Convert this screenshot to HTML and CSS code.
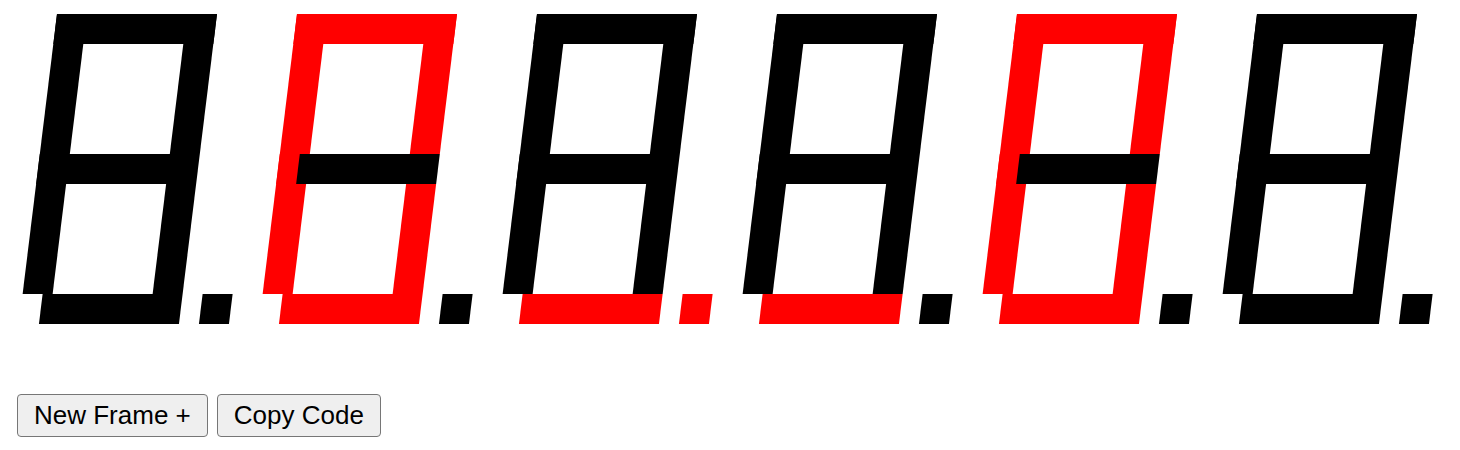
FILE: index.html
```html
<!DOCTYPE html>
<html lang="en">
<head>
<meta charset="utf-8">
<title>Seven Segment Frames</title>
<link rel="stylesheet" href="styles.css">
</head>
<body>
<div class="display-wrap">
  <div class="display">
    <div class="digit">
      <span class="seg a"></span><span class="seg f"></span><span class="seg e"></span>
      <span class="seg b"></span><span class="seg c"></span><span class="seg g"></span>
      <span class="seg d"></span><span class="seg dp"></span>
    </div>
    <div class="digit">
      <span class="seg a on"></span><span class="seg f on"></span><span class="seg e on"></span>
      <span class="seg b on"></span><span class="seg c on"></span><span class="seg g"></span>
      <span class="seg d on"></span><span class="seg dp"></span>
    </div>
    <div class="digit">
      <span class="seg a"></span><span class="seg f"></span><span class="seg e"></span>
      <span class="seg b"></span><span class="seg c"></span><span class="seg g"></span>
      <span class="seg d on"></span><span class="seg dp on"></span>
    </div>
    <div class="digit">
      <span class="seg a"></span><span class="seg f"></span><span class="seg e"></span>
      <span class="seg b"></span><span class="seg c"></span><span class="seg g"></span>
      <span class="seg d on"></span><span class="seg dp"></span>
    </div>
    <div class="digit">
      <span class="seg a on"></span><span class="seg f on"></span><span class="seg e on"></span>
      <span class="seg b on"></span><span class="seg c on"></span><span class="seg g"></span>
      <span class="seg d on"></span><span class="seg dp"></span>
    </div>
    <div class="digit">
      <span class="seg a"></span><span class="seg f"></span><span class="seg e"></span>
      <span class="seg b"></span><span class="seg c"></span><span class="seg g"></span>
      <span class="seg d"></span><span class="seg dp"></span>
    </div>
  </div>
</div>
<div class="controls">
  <button class="btn" type="button">New Frame +</button>
  <button class="btn" type="button">Copy Code</button>
</div>
</body>
</html>
```
FILE: styles.css
```css
body {
  margin: 8px;
  font-family: "Liberation Sans", Arial, sans-serif;
  background: #fff;
}

.display-wrap {
  overflow: hidden;
  margin-top: 6px;
}

.display {
  display: flex;
  gap: 30px;
  padding-left: 48.5px;
  transform: skewX(-7deg);
  transform-origin: 0 0;
}

.digit {
  flex: 0 0 auto;
  display: grid;
  grid-template-columns: 20px 10px 100px 30px 20px 30px;
  grid-template-rows: 30px 110px 30px 110px 30px;
}

.seg {
  display: block;
  background: #000;
}

.seg.on {
  background: #f00;
}

.a { grid-column: 1 / 5; grid-row: 1; }
.f { grid-column: 1 / 3; grid-row: 1 / 4; }
.e { grid-column: 1 / 3; grid-row: 3 / 5; }
.b { grid-column: 4; grid-row: 1 / 3; }
.c { grid-column: 4; grid-row: 4; }
.g { grid-column: 2 / 5; grid-row: 3; }
.d { grid-column: 2 / 5; grid-row: 5; }
.dp { grid-column: 6; grid-row: 5; }

.controls {
  display: flex;
  gap: 9px;
  margin-top: 70px;
  padding-left: 9px;
}

.btn {
  font-family: "Liberation Sans", Arial, sans-serif;
  font-size: 26px;
  padding: 5px 16px;
  color: #000;
  background: #efefef;
  border: 1px solid #767676;
  border-radius: 4px;
}
```
